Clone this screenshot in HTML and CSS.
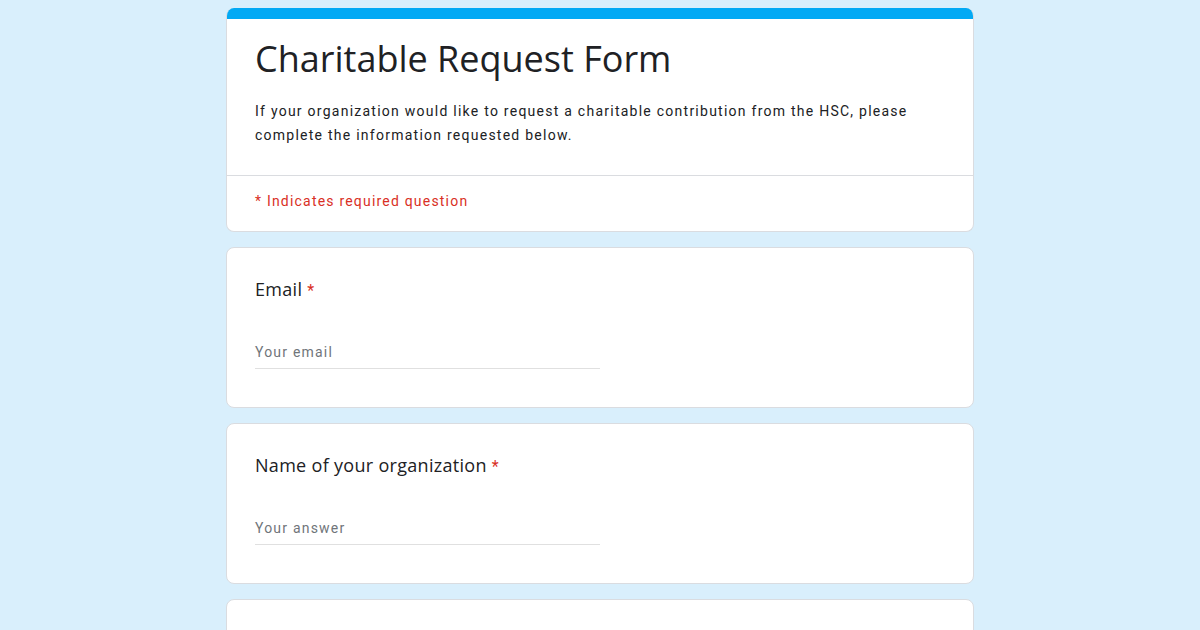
FILE: index.html
```html
<!DOCTYPE html>
<html>
<head>
<meta charset="utf-8">
<link rel="stylesheet" href="styles.css">
</head>
<body>
<div class="page">
  <div class="card header-card">
    <div class="accent"></div>
    <div class="header-main">
      <h1 class="title">Charitable Request Form</h1>
      <div class="desc">If your organization would like to request a charitable contribution from the HSC, please complete the information requested below.</div>
    </div>
    <div class="required-note">* Indicates required question</div>
  </div>

  <div class="card question">
    <div class="label">Email <span class="star">*</span></div>
    <div class="field"><span class="placeholder">Your email</span></div>
  </div>

  <div class="card question">
    <div class="label">Name of your organization <span class="star">*</span></div>
    <div class="field"><span class="placeholder">Your answer</span></div>
  </div>

  <div class="card question"></div>
</div>
</body>
</html>
```
FILE: styles.css
```css
html, body {
  margin: 0;
  padding: 0;
}
body {
  background: #d9effc;
  font-family: Roboto, "Liberation Sans", sans-serif;
  color: #202124;
  overflow: hidden;
  height: 630px;
}
.page {
  width: 748px;
  margin: 8px auto 0;
  display: flex;
  flex-direction: column;
  gap: 15px;
}
.card {
  background: #fff;
  border: 1px solid #dadce0;
  border-radius: 8px;
  overflow: hidden;
}
.header-card {
  border-top: none;
}
.accent {
  height: 11px;
  background: #03a9f4;
}
.header-main {
  padding: 20px 28px 28px;
  border-bottom: 1px solid #dadce0;
}
.title {
  margin: 0;
  font-family: "Open Sans", sans-serif;
  font-weight: 400;
  font-size: 36px;
  line-height: 40px;
  letter-spacing: 0;
  color: #202124;
}
.desc {
  margin-top: 20px;
  font-size: 14px;
  line-height: 24px;
  letter-spacing: 1.25px;
  color: #202124;
}
.required-note {
  padding: 13px 28px 18px;
  font-size: 14px;
  line-height: 24px;
  letter-spacing: 1.2px;
  color: #d93025;
}
.question {
  padding: 29px 28px 38px;
  min-height: 90px;
}
.label {
  font-family: "Open Sans", sans-serif;
  font-size: 18px;
  line-height: 24px;
  letter-spacing: 0.3px;
  color: #202124;
}
.star {
  font-family: Roboto, sans-serif;
  font-size: 16px;
  line-height: 0;
  color: #d93025;
}
.field {
  margin-top: 39px;
  width: 345px;
  border-bottom: 1px solid #e0e0e0;
  padding-bottom: 4px;
}
.placeholder {
  font-size: 14px;
  line-height: 24px;
  letter-spacing: 1.2px;
  color: #70757a;
}
```
